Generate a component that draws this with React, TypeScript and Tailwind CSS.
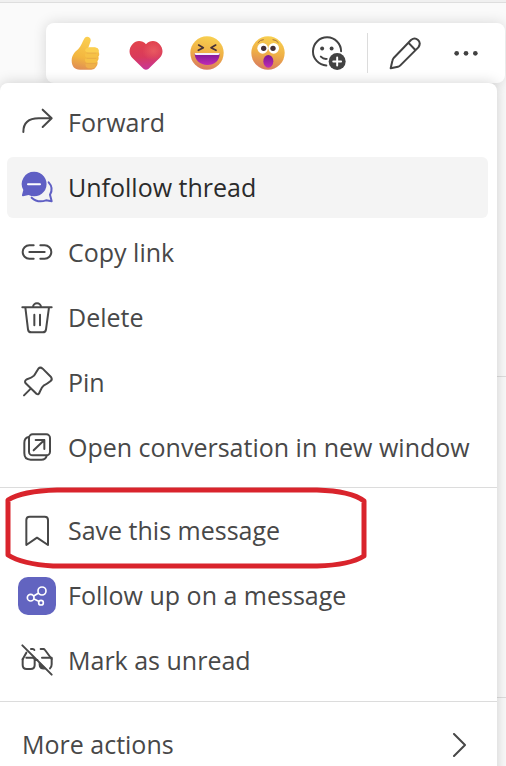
import React from 'react';

interface IconProps {
  children: React.ReactNode;
}

// Menu icons share a 90 unit grid drawn at 30px
const Icon: React.FC<IconProps> = ({ children }) => (
  <svg
    viewBox="0 0 90 90"
    className="size-[30px] shrink-0 overflow-visible"
    fill="none"
    stroke="currentColor"
    strokeWidth="6"
    strokeLinecap="round"
    strokeLinejoin="round"
    aria-hidden="true"
  >
    {children}
  </svg>
);

const ForwardIcon = () => (
  <Icon>
    <path d="M4 72C4 46 20 31 50 31H88M62 5l27 26-27 26" />
  </Icon>
);

const UnfollowIcon = () => (
  <Icon>
    <path d="M37-4a37 37 0 1 1-17 70L3 70q-4 0-3-4l4-15A37 37 0 0 1 37-4z" fill="#5f5fc4" stroke="none" />
    <path d="M18 34h36" stroke="#fff" />
    <path d="M80 28c10 11 11 25 4 37l5 20-17-3c-17 6-32 2-43-8" stroke="#5f5fc4" />
  </Icon>
);

const LinkIcon = () => (
  <Icon>
    <path d="M35 22H22a20 20 0 0 0 0 40h13M55 22h13a20 20 0 0 1 0 40H55M22 42h46" />
  </Icon>
);

const TrashIcon = () => (
  <Icon>
    <path d="M1 13h88M33 13a12 12 0 0 1 24 0M10 13l8 66q1 9 10 9h34q9 0 10-9l9-66M37 35v32M54 35v32" />
  </Icon>
);

const PinIcon = () => (
  <Icon>
    <path d="M6 82l21-21M11 46l33 32q5 3 8-3c4-11 5-16 14-23 8-4 14-8 20-13q6-5 1-12L62 2q-7-6-13 0c-5 8-9 16-13 21-6 6-16 9-22 11q-8 5-3 12z" />
  </Icon>
);

const NewWindowIcon = () => (
  <Icon>
    <rect x="21" y="4" width="63" height="63" rx="11" />
    <path d="M20 12Q7 15 7 29v32q0 19 19 19h32q13 0 16-12M35 52l32-31M41 21h26v27" />
  </Icon>
);

const BookmarkIcon = () => (
  <Icon>
    <path d="M13 87V12Q13 2 23 2h45q10 0 10 10v75L45 65z" />
  </Icon>
);

const FollowUpIcon = () => (
  <svg
    viewBox="0 0 114 114"
    className="-mx-1 size-[38px] shrink-0 rounded-[10px] bg-[#6264c0]"
    fill="none"
    stroke="#fff"
    strokeWidth="5"
    aria-hidden="true"
  >
    <circle cx="72" cy="42" r="12" />
    <circle cx="38" cy="62" r="10" />
    <circle cx="69" cy="77" r="7" />
    <path d="M47 57l15-9M48 66l14 7" />
  </svg>
);

const UnreadIcon = () => (
  <Icon>
    <path d="M1-2l88 88M27 9h5q4 0 5 3M56 9h8q3 0 5 3l20 27M13 20L2 40" />
    <path d="M13 35h18q7 0 7 7v15q0 12-12 12H14Q2 69 2 57V40M60 35h29v20q0 9-5 12M38 42h8" />
    <path d="M52 50l18 18q-18 3-18-12z" fill="currentColor" strokeWidth="4" />
  </Icon>
);

const ThumbEmoji = () => (
  <svg viewBox="0 0 102 102" className="size-[34px]" aria-hidden="true">
    <defs>
      <linearGradient id="thumb" x1="0.6" y1="0" x2="0.4" y2="1">
        <stop offset="0" stopColor="#fbd052" />
        <stop offset="0.65" stopColor="#f3b63f" />
        <stop offset="1" stopColor="#e08f54" />
      </linearGradient>
    </defs>
    <path d="M50 6c7-8 20-2 18 9l-7 20h20q13 1 11 13 4 8-1 14 3 8-3 14 3 9-4 17-4 8-14 8H36C19 101 11 89 11 74c0-16 9-26 20-35 9-9 12-22 19-33z" fill="url(#thumb)" />
    <path d="M51 42c3-6 9-8 15-8h14q13 2 11 12-1 5-8 5H63q-9 0-12-9z" fill="#fbcf50" />
    <path d="M51 54q2-3 8-3h24q8 2 6 9-1 6-7 6H58q-8-1-7-12zM51 70q2-3 8-3h22q7 2 6 9-1 5-8 5H58q-8-1-7-11z" fill="#f6c146" />
    <path d="M52 85q2-3 8-3h20q5 3 3 8-2 7-10 7H60q-8-3-8-12z" fill="#efb04a" />
    <path d="M57 51h27M57 67h26M57 82h25" stroke="#e3a545" strokeWidth="2" strokeLinecap="round" />
  </svg>
);

const HeartEmoji = () => (
  <svg viewBox="0 0 102 102" className="size-[34px]" aria-hidden="true">
    <defs>
      <linearGradient id="heart" x1="0.4" y1="0" x2="0.5" y2="1">
        <stop offset="0" stopColor="#e2434b" />
        <stop offset="0.55" stopColor="#d93a5c" />
        <stop offset="1" stopColor="#c8359a" />
      </linearGradient>
      <radialGradient id="heartGlow" cx="0.73" cy="0.34" r="0.34">
        <stop offset="0" stopColor="#ec6163" stopOpacity="0.8" />
        <stop offset="1" stopColor="#ec6163" stopOpacity="0" />
      </radialGradient>
    </defs>
    <path d="M51 25C62 12 81 12 91 24c13 14 12 31 0 43L58 99q-7 5-14 0L11 67C-1 55-2 38 11 24c10-12 29-12 40 1z" fill="url(#heart)" />
    <path d="M51 25C62 12 81 12 91 24c13 14 12 31 0 43L58 99q-7 5-14 0L11 67C-1 55-2 38 11 24c10-12 29-12 40 1z" fill="url(#heartGlow)" />
  </svg>
);

const LaughEmoji = () => (
  <svg viewBox="0 0 102 102" className="size-[34px]" aria-hidden="true">
    <defs>
      <linearGradient id="face" x1="0.6" y1="0" x2="0.4" y2="1">
        <stop offset="0" stopColor="#f8d050" />
        <stop offset="0.5" stopColor="#efb046" />
        <stop offset="1" stopColor="#d87a60" />
      </linearGradient>
      <linearGradient id="mouth" x1="0" y1="0" x2="0" y2="1">
        <stop offset="0" stopColor="#7b1795" />
        <stop offset="1" stopColor="#c02bb4" />
      </linearGradient>
    </defs>
    <circle cx="51" cy="51" r="50" fill="url(#face)" />
    <path d="M26 27l14 8-15 8M77 27l-14 8 15 8" fill="none" stroke="#463137" strokeWidth="5" strokeLinecap="round" strokeLinejoin="round" />
    <path d="M14 52q1-1 3-1h70q2 0 2 3c-1 20-15 33-37 33S14 73 14 52z" fill="url(#mouth)" />
    <path d="M14 51h75q0 6-4 6H18q-4 0-4-6z" fill="#f5effa" />
  </svg>
);

const SurprisedEmoji = () => (
  <svg viewBox="0 0 102 102" className="size-[34px]" aria-hidden="true">
    <circle cx="51" cy="51" r="50" fill="url(#face)" />
    <path d="M21 20q6-9 16-9M66 11q10 0 16 9" fill="none" stroke="#a8703c" strokeWidth="3" strokeLinecap="round" />
    <circle cx="35" cy="37" r="16" fill="#fff" />
    <circle cx="68" cy="37" r="16" fill="#fff" />
    <circle cx="38" cy="37" r="8" fill="#443036" />
    <circle cx="66" cy="37" r="8" fill="#443036" />
    <ellipse cx="52" cy="76" rx="15" ry="19" fill="url(#mouth)" />
  </svg>
);

const AddReactionIcon = () => (
  <svg viewBox="0 0 102 104" className="size-[34px]" fill="none" stroke="currentColor" strokeLinecap="round" aria-hidden="true">
    <path d="M43 90A43 43 0 1 1 88 47" strokeWidth="6" />
    <circle cx="30" cy="38" r="6" fill="currentColor" stroke="none" />
    <circle cx="59" cy="38" r="6" fill="currentColor" stroke="none" />
    <path d="M26 63q8 8 18 7" strokeWidth="6" />
    <circle cx="76" cy="78" r="26" fill="currentColor" stroke="none" />
    <path d="M64 78h24M76 66v24" stroke="#fff" strokeWidth="6" />
  </svg>
);

const PencilIcon = () => (
  <svg viewBox="0 0 102 102" className="size-[34px]" fill="none" stroke="currentColor" strokeWidth="6" strokeLinejoin="round" aria-hidden="true">
    <path d="M69 12q11-9 21 0t1 22L37 88q-3 3-7 4L8 97l5-22q1-5 4-9zM61 20l21 22" />
  </svg>
);

const DotsIcon = () => (
  <svg viewBox="0 0 102 102" className="size-[34px]" fill="currentColor" aria-hidden="true">
    <circle cx="23" cy="52" r="7" />
    <circle cx="51" cy="52" r="7" />
    <circle cx="79" cy="52" r="7" />
  </svg>
);

interface MenuItemProps {
  icon?: React.ReactNode;
  label: string;
  active?: boolean;
  children?: React.ReactNode;
}

const MenuItem: React.FC<MenuItemProps> = ({ icon, label, active, children }) => (
  <li className="relative">
    <button
      type="button"
      className={`flex h-[61px] w-full items-center gap-4 rounded-md px-[15px] text-left whitespace-nowrap ${
        active ? 'bg-[#f4f4f4] text-[#2b2b2b]' : 'text-[#484848]'
      }`}
    >
      {icon}
      <span>{label}</span>
    </button>
    {children}
  </li>
);

// Hand drawn outline around a menu item
const Highlight = () => (
  <svg
    viewBox="0 0 362 82"
    className="pointer-events-none absolute -top-[13px] -left-[2px] z-10 w-[362px]"
    fill="none"
    stroke="#d9242c"
    strokeWidth="5"
    strokeLinejoin="round"
    aria-hidden="true"
  >
    <path d="M52 3H312Q346 4 359 14V69Q345 78 312 79H48Q17 77 3 68V13Q17 4 52 3z" />
  </svg>
);

const reactions = [
  { name: 'Like', icon: <ThumbEmoji /> },
  { name: 'Heart', icon: <HeartEmoji /> },
  { name: 'Laugh', icon: <LaughEmoji /> },
  { name: 'Surprised', icon: <SurprisedEmoji /> },
  { name: 'More reactions', icon: <AddReactionIcon /> },
];

export default function App() {
  return (
    <div className="relative h-screen overflow-hidden bg-[#fafafa] font-['Open_Sans','Noto_Sans',sans-serif] text-[25px] text-[#424242]">
      <div className="absolute inset-0 flex flex-col" aria-hidden="true">
        <div className="h-[3px] border-b border-[#dedede] bg-[#f0f0f0]" />
        <div className="h-[374px] border-b border-[#dedede]" />
        <div className="h-[321px] border-b border-[#dedede]" />
      </div>

      <div className="relative pt-[23px]">
        <div className="mr-px ml-[46px] flex h-[60px] items-center justify-between rounded-lg bg-white px-[22px] shadow-[0_0_14px_rgba(0,0,0,0.14)]">
          <div className="flex items-center gap-[27px]">
            {reactions.map((reaction) => (
              <button key={reaction.name} type="button" aria-label={reaction.name}>
                {reaction.icon}
              </button>
            ))}
          </div>
          <div className="h-10 w-px bg-[#dcdcdc]" />
          <div className="flex items-center gap-[27px]">
            <button type="button" aria-label="Edit">
              <PencilIcon />
            </button>
            <button type="button" aria-label="More options">
              <DotsIcon />
            </button>
          </div>
        </div>

        <nav className="mr-[9px] rounded-lg bg-white pt-[9px] shadow-[0_0_14px_rgba(0,0,0,0.18)]">
          <ul className="flex flex-col gap-1 pr-[9px] pb-[9px] pl-[7px]">
            <MenuItem icon={<ForwardIcon />} label="Forward" />
            <MenuItem icon={<UnfollowIcon />} label="Unfollow thread" active />
            <MenuItem icon={<LinkIcon />} label="Copy link" />
            <MenuItem icon={<TrashIcon />} label="Delete" />
            <MenuItem icon={<PinIcon />} label="Pin" />
            <MenuItem icon={<NewWindowIcon />} label="Open conversation in new window" />
          </ul>
          <ul className="flex flex-col gap-1 border-t border-[#dcdcdc] pt-3 pr-[9px] pb-[10px] pl-[7px]">
            <MenuItem icon={<BookmarkIcon />} label="Save this message">
              <Highlight />
            </MenuItem>
            <MenuItem icon={<FollowUpIcon />} label="Follow up on a message" />
            <MenuItem icon={<UnreadIcon />} label="Mark as unread" />
          </ul>
          <div className="border-t border-[#dcdcdc] pt-3 pr-[9px] pb-3 pl-[7px]">
            <button type="button" className="flex h-[61px] w-full items-center justify-between pr-[22px] pl-[15px] text-[#484848]">
              <span>More actions</span>
              <svg viewBox="0 0 14 24" className="h-6 w-[14px]" fill="none" stroke="currentColor" strokeWidth="2" strokeLinecap="round" strokeLinejoin="round" aria-hidden="true">
                <path d="M2 1l11 11L2 23" />
              </svg>
            </button>
          </div>
        </nav>
      </div>
    </div>
  );
}
